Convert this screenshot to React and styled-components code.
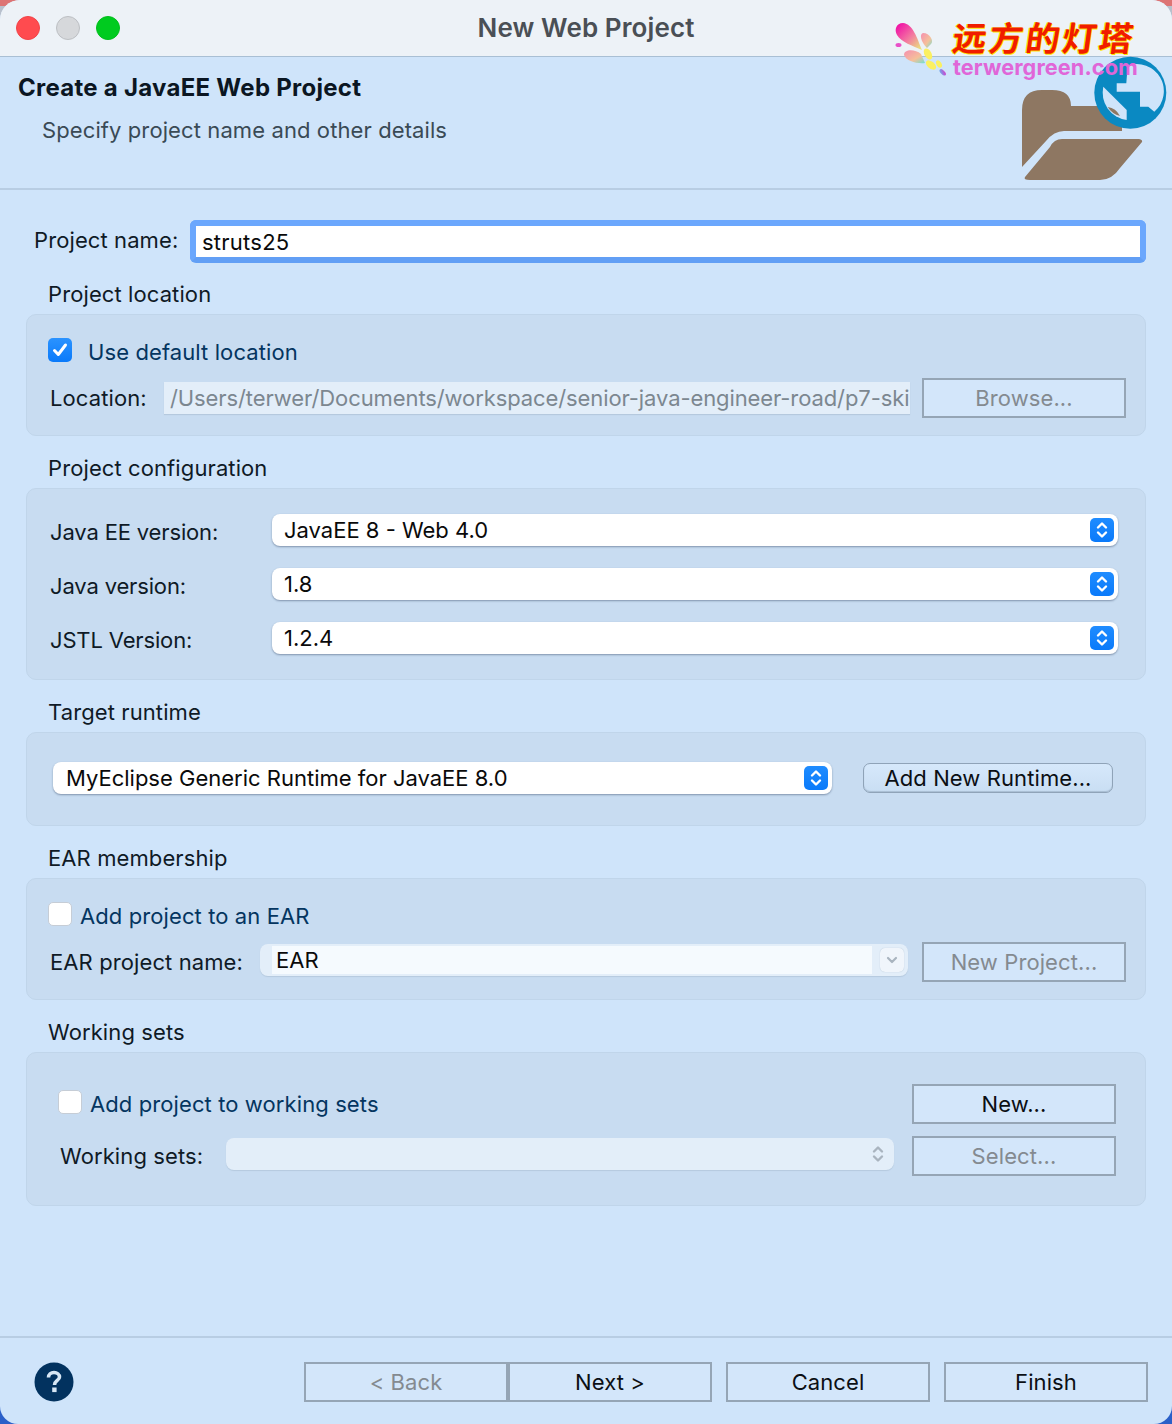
import React from "react";
import styled, { createGlobalStyle } from "styled-components";

const GlobalStyle = createGlobalStyle`
  html, body {
    margin: 0;
    padding: 0;
  }
  body {
    font-family: "Inter", "Liberation Sans", sans-serif;
    font-size: 22px;
    letter-spacing: 0.1px;
    color: #0f1a26;
  }
`;

const Desktop = styled.div`
  width: 1172px;
  height: 1424px;
  overflow: hidden;
  background: linear-gradient(#dd7474 0 6px, #b8c0cc 6px 1404px, #2a5fc8 1404px);
`;

const Window = styled.div`
  position: relative;
  height: 100%;
  display: flex;
  flex-direction: column;
  background: #cfe4fa;
  border-radius: 20px 20px 18px 18px;
  overflow: hidden;
`;

const TitleBar = styled.div`
  flex: none;
  height: 56px;
  box-sizing: content-box;
  display: grid;
  grid-template-columns: 1fr auto 1fr;
  align-items: center;
  background: #edf2f7;
  border-bottom: 1px solid #a9bfd4;
`;

const Lights = styled.div`
  display: flex;
  gap: 16px;
  padding-left: 16px;
`;

const Light = styled.span`
  width: 24px;
  height: 24px;
  box-sizing: border-box;
  border-radius: 50%;
  background: ${(p) => p.$color};
  border: 1px solid ${(p) => p.$edge};
`;

const WindowTitle = styled.div`
  font-size: 26px;
  font-weight: 600;
  letter-spacing: 0.1px;
  margin-top: -2px;
  color: #4a4f55;
`;

const Header = styled.div`
  flex: none;
  height: 131px;
  box-sizing: content-box;
  display: flex;
  justify-content: space-between;
  border-bottom: 2px solid #b8cde3;
  padding: 0 4px 0 18px;
`;

const Heading = styled.div`
  margin-top: 16px;
  height: 30px;
  line-height: 30px;
  font-size: 24px;
  font-weight: 700;
  letter-spacing: 0.27px;
  color: #0b1622;
`;

const SubHeading = styled.div`
  margin-top: 12px;
  padding-left: 24px;
  height: 30px;
  line-height: 30px;
  color: #3a4a55;
`;

const FolderIcon = styled.svg`
  flex: none;
  width: 146px;
  height: 124px;
  margin-top: -1px;
  position: relative;
  z-index: 1;
`;

const Watermark = styled.div`
  position: absolute;
  top: 18px;
  left: 893px;
  z-index: 2;
  display: flex;
  align-items: flex-start;
  gap: 6px;
`;

const Flower = styled.svg`
  flex: none;
  width: 54px;
  height: 58px;
  margin-top: 4px;
`;

const MarkText = styled.div`
  display: flex;
  flex-direction: column;
`;

const MarkName = styled.div`
  font-family: "Noto Sans CJK SC", sans-serif;
  font-weight: 700;
  font-size: 34px;
  line-height: 37px;
  letter-spacing: 2.6px;
  white-space: nowrap;
  color: #f01c00;
  text-shadow: 1px 1px 0 #ffe600, -1px 0 0 #ffe600;
  transform: skewX(-8deg);
`;

const MarkUrl = styled.div`
  font-weight: 700;
  font-size: 21.7px;
  line-height: 25px;
  white-space: nowrap;
  color: #e066d8;
`;

const Form = styled.div`
  flex: 1;
  display: flex;
  flex-direction: column;
  padding: 0 26px;
`;

const NameRow = styled.div`
  display: flex;
  align-items: center;
  margin-top: 30px;
  height: 43px;
`;

const NameLabel = styled.label`
  flex: none;
  width: 164px;
  padding-left: 8px;
  box-sizing: border-box;
  margin-top: -4px;
`;

const NameInput = styled.div`
  flex: 1;
  height: 43px;
  box-sizing: border-box;
  display: flex;
  align-items: center;
  padding-left: 6px;
  background: #fff;
  border: 6px solid #6ba7fd;
  border-bottom-color: #629ff5;
  border-radius: 6px;
  letter-spacing: 0.25px;
  color: #0a0a0a;
`;

const GroupLabel = styled.div`
  margin-top: ${(p) => (p.$first ? 16 : 17)}px;
  height: 30px;
  line-height: 30px;
  padding-left: 22px;
`;

const Panel = styled.div`
  margin-top: 5px;
  box-sizing: border-box;
  height: ${(p) => p.$height}px;
  padding: ${(p) => p.$top}px ${(p) => p.$right}px 0 ${(p) => p.$left}px;
  display: flex;
  flex-direction: column;
  gap: ${(p) => p.$gap}px;
  background: #c8dcf1;
  border: 1px solid #c0d5ea;
  border-radius: 10px;
`;

const CheckRow = styled.div`
  display: flex;
  align-items: center;
  height: 24px;
  gap: ${(p) => p.$gap}px;
  color: #043560;
`;

const LiftedCheckRow = styled(CheckRow)`
  margin-top: -4px;
`;

const CheckText = styled.span`
  margin-top: 4px;
`;

const CheckBox = styled.span`
  flex: none;
  width: 24px;
  height: 24px;
  box-sizing: border-box;
  border-radius: 5px;
  display: flex;
  align-items: center;
  justify-content: center;
  background: ${(p) => (p.$checked ? "linear-gradient(#2b93ff, #0a7afa)" : "#fff")};
  border: ${(p) => (p.$checked ? "none" : "1px solid #c6cdd6")};
`;

const FieldRow = styled.div`
  display: flex;
  align-items: center;
  height: ${(p) => p.$height || 40}px;
  gap: ${(p) => p.$gap || 0}px;
`;

const SpreadRow = styled(FieldRow)`
  justify-content: space-between;
`;

const FieldLabel = styled.span`
  flex: none;
  width: ${(p) => p.$width}px;
  box-sizing: border-box;
  padding-left: 2px;
`;

const ConfigLabel = styled(FieldLabel)`
  margin-top: 4px;
  letter-spacing: -0.15px;
`;

const ReadOnlyField = styled.div`
  flex: none;
  width: 746px;
  height: 32px;
  line-height: 32px;
  margin-right: 12px;
  padding-left: 6px;
  box-sizing: border-box;
  overflow: hidden;
  white-space: nowrap;
  letter-spacing: -0.1px;
  background: #e3eef9;
  box-shadow: 0 1px 1px #b5c9de;
  color: #7c8790;
`;

const PlainButton = styled.div`
  flex: none;
  width: 204px;
  height: 40px;
  box-sizing: border-box;
  display: flex;
  align-items: center;
  justify-content: center;
  background: #d3e6fa;
  border: 2px solid #95a5b5;
  color: ${(p) => (p.$disabled ? "#848a90" : "#0b0f14")};
`;

const PopButton = styled.div`
  flex: none;
  width: 250px;
  height: 30px;
  box-sizing: border-box;
  display: flex;
  align-items: center;
  justify-content: center;
  border: 1px solid #8fa3b8;
  border-radius: 7px;
  background: linear-gradient(#d6e8fb, #c9def3);
  box-shadow: inset 0 -1px 1px #a8bdd2;
  color: #0b0f14;
`;

const Select = styled.div`
  flex: ${(p) => (p.$fixed ? "none" : "1")};
  width: ${(p) => (p.$fixed ? `${p.$fixed}px` : "auto")};
  height: 32px;
  box-sizing: border-box;
  display: flex;
  align-items: center;
  justify-content: space-between;
  padding: 0 4px 0 ${(p) => (p.$fixed ? 13 : 12)}px;
  background: #fff;
  border-radius: 8px;
  box-shadow: 0 1px 2px rgba(40, 60, 90, 0.45);
  letter-spacing: 0;
  color: #0a0a0a;
`;

const Stepper = styled.span`
  flex: none;
  width: 24px;
  height: 24px;
  border-radius: 5px;
  display: flex;
  align-items: center;
  justify-content: center;
  background: linear-gradient(#1f8cff, #0a7afa);
`;

const EarCombo = styled.div`
  flex: none;
  width: 648px;
  height: 32px;
  display: flex;
  align-items: center;
  margin: -4px 14px 0 0;
  padding-left: 12px;
  box-sizing: border-box;
  background: #e3eef9;
  border-radius: 8px;
  box-shadow: 0 1px 1px #b5c9de;
`;

const EarInput = styled.div`
  width: 600px;
  height: 28px;
  line-height: 28px;
  padding-left: 4px;
  box-sizing: border-box;
  background: #f5fafe;
  color: #0a0a0a;
`;

const EarArrow = styled.span`
  width: 24px;
  height: 24px;
  margin-left: 8px;
  border-radius: 5px;
  display: flex;
  align-items: center;
  justify-content: center;
  background: #f0f5fb;
  box-shadow: 0 0 1px rgba(70, 100, 130, 0.35);
`;

const DisabledSelect = styled.div`
  flex: none;
  width: 668px;
  height: 32px;
  margin: -4px 18px 0 0;
  padding-right: 8px;
  box-sizing: border-box;
  display: flex;
  align-items: center;
  justify-content: flex-end;
  background: #e3eef9;
  border-radius: 8px;
  box-shadow: 0 1px 1px #b5c9de;
`;

const Footer = styled.div`
  flex: none;
  height: 84px;
  box-sizing: content-box;
  border-top: 2px solid #b8cde3;
  display: flex;
  align-items: center;
  justify-content: space-between;
  padding: 2px 24px 0 34px;
`;

const FooterButtons = styled.div`
  display: flex;
  gap: 14px;
`;

const ButtonPair = styled.div`
  display: flex;
`;

const Arrows = ({ color = "#fff" }) => (
  <svg width="16" height="20" viewBox="0 0 16 20" fill="none" stroke={color} strokeWidth="2.4" strokeLinecap="round" strokeLinejoin="round">
    <path d="M4 7.5 8 3.5l4 4" />
    <path d="M4 12.5l4 4 4-4" />
  </svg>
);

const Folder = () => (
  <FolderIcon viewBox="0 0 146 124">
    <path fill="#8e7762" d="M0 111V54Q0 34 20 34H30Q49 34 49 50H100V75H42Q32 75 24 85Z" />
    <path fill="#8e7762" d="M3 121L28 91Q32 83 40 83H117Q121 84 120 86L98 112Q90 124 78 124H8Q1 124 3 121Z" />
    <circle cx="108.3" cy="36.7" r="36" fill="#0a89c2" />
    <path fill="#cfe4fa" d="M105.7 9.7L104.3 27.3H94.7V35.7H118V50.7H126.3L132.3 55.7A27 27 0 0 0 105.7 9.7Z" />
    <path fill="#cfe4fa" d="M81.3 30.7L104.7 54V64A27.5 27.5 0 0 1 81.3 30.7Z" />
    <path fill="#8e7762" d="M85.7 51Q94 52 98 60Q90 58 85.7 51Z" />
  </FolderIcon>
);

const Logo = () => (
  <Flower viewBox="0 0 54 58">
    <defs>
      <linearGradient id="petalA" x1="0" y1="0" x2="1" y2="1">
        <stop offset="0" stopColor="#f000a8" />
        <stop offset="0.55" stopColor="#f37ca0" />
        <stop offset="1" stopColor="#e8f07a" />
      </linearGradient>
      <linearGradient id="petalB" x1="0" y1="0" x2="1" y2="1">
        <stop offset="0" stopColor="#f590b0" />
        <stop offset="0.6" stopColor="#f5c09a" />
        <stop offset="1" stopColor="#70e0d0" />
      </linearGradient>
      <linearGradient id="petalC" x1="0" y1="0" x2="1" y2="1">
        <stop offset="0" stopColor="#60b8f0" />
        <stop offset="1" stopColor="#e030c8" />
      </linearGradient>
    </defs>
    <path fill="url(#petalA)" d="M29 28C24 16 20 2 10 1C3 1 1 8 4 13C8 20 20 24 29 28Z" />
    <path fill="url(#petalB)" d="M34 26C28 20 26 12 30 11C37 11 41 19 38 22Z" />
    <ellipse cx="5.5" cy="23" rx="3" ry="2" fill="#e850c8" />
    <path fill="url(#petalB)" d="M32 41C24 42 13 39 11 33C11 27 22 27 28 32Z" />
    <ellipse cx="35" cy="32" rx="3.5" ry="6" transform="rotate(-30 35 32)" fill="#fbf060" />
    <ellipse cx="38" cy="43" rx="6" ry="3.5" transform="rotate(40 38 43)" fill="#fbf060" />
    <ellipse cx="46" cy="42" rx="2.5" ry="4" transform="rotate(-30 46 42)" fill="#fbf060" />
    <ellipse cx="49.7" cy="50.3" rx="2" ry="4" transform="rotate(-45 49.7 50.3)" fill="url(#petalC)" />
  </Flower>
);

const Help = () => (
  <svg width="40" height="40" viewBox="0 0 40 40">
    <circle cx="20" cy="20" r="19.5" fill="#02325f" />
    <path d="M14.5 15.5C14.5 12.5 17 10.5 20 10.5C23 10.5 25.5 12.5 25.5 15C25.5 18.5 20.5 18.5 20.5 23" fill="none" stroke="#d6e6f5" strokeWidth="3.6" />
    <rect x="18.2" y="25.5" width="4.4" height="4.6" fill="#d6e6f5" />
  </svg>
);

const App = () => (
  <Desktop>
    <GlobalStyle />
    <Window>
      <Watermark>
        <Logo />
        <MarkText>
          <MarkName>远方的灯塔</MarkName>
          <MarkUrl>terwergreen.com</MarkUrl>
        </MarkText>
      </Watermark>
      <TitleBar>
        <Lights>
          <Light $color="#ff4b4f" $edge="#f04448" />
          <Light $color="#d6d8db" $edge="#bcbfc3" />
          <Light $color="#00cb1f" $edge="#00bf1c" />
        </Lights>
        <WindowTitle>New Web Project</WindowTitle>
      </TitleBar>
      <Header>
        <div>
          <Heading>Create a JavaEE Web Project</Heading>
          <SubHeading>Specify project name and other details</SubHeading>
        </div>
        <Folder />
      </Header>
      <Form>
        <NameRow>
          <NameLabel>Project name:</NameLabel>
          <NameInput>struts25</NameInput>
        </NameRow>

        <GroupLabel $first>Project location</GroupLabel>
        <Panel $height={122} $top={23} $left={21} $right={19} $gap={16}>
          <CheckRow $gap={16}>
            <CheckBox $checked>
              <svg width="18" height="18" viewBox="0 0 18 18" fill="none" stroke="#fff" strokeWidth="3" strokeLinecap="round" strokeLinejoin="round">
                <path d="M3.5 9.5l3.8 4L14.5 4" />
              </svg>
            </CheckBox>
            <CheckText>Use default location</CheckText>
          </CheckRow>
          <FieldRow>
            <FieldLabel $width={116}>Location:</FieldLabel>
            <ReadOnlyField>/Users/terwer/Documents/workspace/senior-java-engineer-road/p7-ski</ReadOnlyField>
            <PlainButton $disabled>Browse...</PlainButton>
          </FieldRow>
        </Panel>

        <GroupLabel>Project configuration</GroupLabel>
        <Panel $height={192} $top={25} $left={21} $right={27} $gap={22}>
          <FieldRow $height={32}>
            <ConfigLabel $width={224}>Java EE version:</ConfigLabel>
            <Select>JavaEE 8 - Web 4.0<Stepper><Arrows /></Stepper></Select>
          </FieldRow>
          <FieldRow $height={32}>
            <ConfigLabel $width={224}>Java version:</ConfigLabel>
            <Select>1.8<Stepper><Arrows /></Stepper></Select>
          </FieldRow>
          <FieldRow $height={32}>
            <ConfigLabel $width={224}>JSTL Version:</ConfigLabel>
            <Select>1.2.4<Stepper><Arrows /></Stepper></Select>
          </FieldRow>
        </Panel>

        <GroupLabel>Target runtime</GroupLabel>
        <Panel $height={94} $top={29} $left={26} $right={32} $gap={0}>
          <FieldRow $height={32} $gap={31}>
            <Select $fixed={779}>MyEclipse Generic Runtime for JavaEE 8.0<Stepper><Arrows /></Stepper></Select>
            <PopButton>Add New Runtime...</PopButton>
          </FieldRow>
        </Panel>

        <GroupLabel>EAR membership</GroupLabel>
        <Panel $height={122} $top={23} $left={21} $right={19} $gap={16}>
          <CheckRow $gap={8}>
            <CheckBox />
            <CheckText>Add project to an EAR</CheckText>
          </CheckRow>
          <FieldRow>
            <FieldLabel $width={212}>EAR project name:</FieldLabel>
            <EarCombo>
              <EarInput>EAR</EarInput>
              <EarArrow>
                <svg width="14" height="14" viewBox="0 0 14 14" fill="none" stroke="#a9b4bf" strokeWidth="2.2" strokeLinecap="round" strokeLinejoin="round">
                  <path d="M3 5l4 4 4-4" />
                </svg>
              </EarArrow>
            </EarCombo>
            <PlainButton $disabled>New Project...</PlainButton>
          </FieldRow>
        </Panel>

        <GroupLabel>Working sets</GroupLabel>
        <Panel $height={154} $top={31} $left={31} $right={29} $gap={12}>
          <SpreadRow>
            <LiftedCheckRow $gap={8}>
              <CheckBox />
              <CheckText>Add project to working sets</CheckText>
            </LiftedCheckRow>
            <PlainButton>New...</PlainButton>
          </SpreadRow>
          <FieldRow>
            <FieldLabel $width={168}>Working sets:</FieldLabel>
            <DisabledSelect><Arrows color="#a9b4bf" /></DisabledSelect>
            <PlainButton $disabled>Select...</PlainButton>
          </FieldRow>
        </Panel>
      </Form>
      <Footer>
        <Help />
        <FooterButtons>
          <ButtonPair>
            <PlainButton $disabled>&lt; Back</PlainButton>
            <PlainButton>Next &gt;</PlainButton>
          </ButtonPair>
          <PlainButton>Cancel</PlainButton>
          <PlainButton>Finish</PlainButton>
        </FooterButtons>
      </Footer>
    </Window>
  </Desktop>
);

export default App;
